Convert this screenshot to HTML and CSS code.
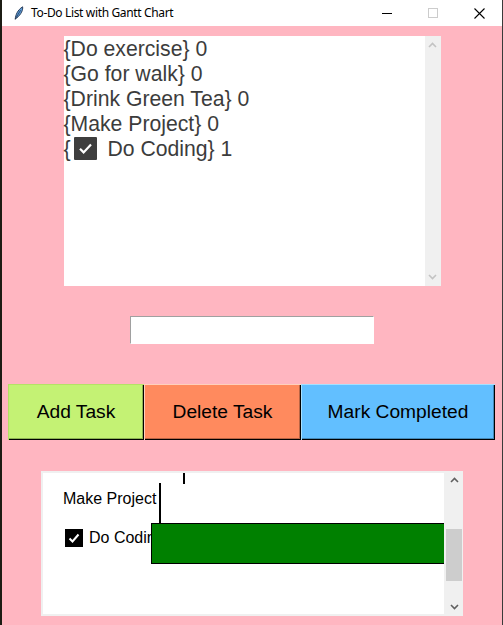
FILE: index.html
```html
<!DOCTYPE html>
<html>
<head>
<meta charset="utf-8">
<title>To-Do List with Gantt Chart</title>
<link rel="stylesheet" href="styles.css">
</head>
<body>
<div class="screen">
  <div class="desk-edge"></div>
  <div class="window">
    <div class="titlebar">
      <svg class="app-icon" width="10" height="14" viewBox="0 0 10 14">
        <path d="M1.2 13.2 C1.6 9 3.5 4 8.6 0.8 C9.2 3.6 7.4 8.4 2.4 12.2 Z" fill="#5b9bd8" stroke="#1d2f4a" stroke-width="0.9"/>
        <path d="M1.2 13.2 L6.6 4.2" stroke="#1d2f4a" stroke-width="0.7"/>
      </svg>
      <span class="title">To-Do List with Gantt Chart</span>
      <div class="controls">
        <div class="ctl"><svg width="10" height="10" viewBox="0 0 10 10"><path d="M0 5.5 H10" stroke="#000" stroke-width="1"/></svg></div>
        <div class="ctl"><svg width="10" height="10" viewBox="0 0 10 10"><rect x="0.5" y="0.5" width="9" height="9" fill="none" stroke="#cccccc" stroke-width="1"/></svg></div>
        <div class="ctl"><svg width="11" height="11" viewBox="0 0 11 11"><path d="M0.5 0.5 L10.5 10.5 M10.5 0.5 L0.5 10.5" stroke="#000" stroke-width="1.1"/></svg></div>
      </div>
    </div>
    <div class="content">
      <div class="listbox">
        <ul class="items">
          <li>{Do exercise} 0</li>
          <li>{Go for walk} 0</li>
          <li>{Drink Green Tea} 0</li>
          <li>{Make Project} 0</li>
          <li>{<span class="emoji-check"><svg width="23" height="23" viewBox="0 0 23 23"><rect width="23" height="23" rx="1" fill="#3e3e3e"/><path d="M6 11.8 L9.6 15.4 L17 7.6" fill="none" stroke="#fff" stroke-width="2.2"/></svg></span> Do Coding} 1</li>
        </ul>
        <div class="vscroll faint">
          <svg class="arrow" width="9" height="6" viewBox="0 0 9 6"><path d="M1 5 L4.5 1.5 L8 5" fill="none" stroke="#c3c3c3" stroke-width="1.6"/></svg>
          <div class="track"></div>
          <svg class="arrow" width="9" height="6" viewBox="0 0 9 6"><path d="M1 1 L4.5 4.5 L8 1" fill="none" stroke="#c3c3c3" stroke-width="1.6"/></svg>
        </div>
      </div>

      <input class="entry" type="text">

      <div class="buttons">
        <button class="btn btn-add">Add Task</button>
        <button class="btn btn-delete">Delete Task</button>
        <button class="btn btn-mark">Mark Completed</button>
      </div>

      <div class="gantt">
        <div class="canvas">
          <div class="tick"></div>
          <div class="vline"></div>
          <div class="label label-make">Make Project</div>
          <div class="label label-code"><span class="cbox"><svg width="18" height="18" viewBox="0 0 18 18"><rect width="18" height="18" fill="#000"/><path d="M4.5 9.5 L7.5 12.5 L13.5 5.5" fill="none" stroke="#fff" stroke-width="2"/></svg></span>Do Coding</div>
          <div class="bar"></div>
        </div>
        <div class="vscroll">
          <svg class="arrow" width="9" height="6" viewBox="0 0 9 6"><path d="M1 5 L4.5 1.5 L8 5" fill="none" stroke="#606060" stroke-width="1.6"/></svg>
          <div class="track"><div class="thumb"></div></div>
          <svg class="arrow" width="9" height="6" viewBox="0 0 9 6"><path d="M1 1 L4.5 4.5 L8 1" fill="none" stroke="#606060" stroke-width="1.6"/></svg>
        </div>
      </div>
    </div>
  </div>
</div>
</body>
</html>
```

FILE: styles.css
```css
html, body {
  margin: 0;
  padding: 0;
}
body {
  width: 503px;
  height: 625px;
  overflow: hidden;
  background: #ffb6c1;
}
.screen {
  display: flex;
  width: 503px;
  height: 625px;
}
.desk-edge {
  width: 2px;
  background: #1c1c14;
  flex: none;
}
.window {
  flex: none;
  width: 500px;
  border-right: 1px solid #3a3a3a;
  display: flex;
  flex-direction: column;
  background: #ffb6c1;
}
.titlebar {
  height: 26px;
  background: #ffffff;
  display: flex;
  align-items: center;
  flex: none;
}
.app-icon {
  margin-left: 12px;
  margin-top: -1px;
}
.title {
  margin-left: 7px;
  font-family: "Noto Sans", "Open Sans", sans-serif;
  font-size: 12px;
  color: #000;
  letter-spacing: -0.35px;
  margin-top: -2px;
}
.controls {
  margin-left: auto;
  display: flex;
  height: 26px;
}
.ctl {
  width: 46px;
  height: 26px;
  display: flex;
  align-items: center;
  justify-content: center;
}
.content {
  flex: 1;
  display: flex;
  flex-direction: column;
  align-items: center;
}

/* listbox */
.listbox {
  margin-top: 10px;
  width: 377px;
  height: 250px;
  background: #ffffff;
  display: flex;
  flex: none;
}
.items {
  list-style: none;
  margin: 0;
  padding: 0;
  flex: 1;
  font-family: "Liberation Sans", Arial, sans-serif;
  font-size: 21.2px;
  line-height: 25px;
  color: #3c3c3c;
  white-space: nowrap;
}
.emoji-check {
  display: inline-block;
  width: 23px;
  height: 23px;
  margin-left: 3px;
  margin-right: 5px;
  vertical-align: -4px;
}
.emoji-check svg {
  display: block;
}
.vscroll {
  width: 16px;
  background: #f0f0f0;
  display: flex;
  flex-direction: column;
  align-items: center;
  flex: none;
}
.vscroll .arrow {
  flex: none;
  margin: 6px 0;
}
.vscroll .track {
  flex: 1;
  width: 100%;
  position: relative;
}

/* entry */
.entry {
  margin-top: 30px;
  width: 244px;
  height: 28px;
  box-sizing: border-box;
  border: 1px solid #ffffff;
  border-top-color: #a0a0a0;
  border-left-color: #a0a0a0;
  background: #ffffff;
  padding: 0;
  outline: none;
  flex: none;
}

/* buttons */
.buttons {
  margin-top: 40px;
  align-self: flex-start;
  margin-left: 6px;
  display: flex;
  height: 56px;
  flex: none;
}
.btn {
  height: 56px;
  border: none;
  padding: 0;
  margin: 0;
  font-family: "Liberation Sans", Arial, sans-serif;
  font-size: 19.2px;
  color: #000;
}
.btn-add {
  width: 136px;
  background: #c4f274;
  box-shadow: inset 1px 1px 0 #b5e266, inset -1px -1px 0 #000, inset -2px -2px 0 #8cb252;
}
.btn-delete {
  width: 157px;
  background: #ff8a5e;
  box-shadow: inset 1px 1px 0 #ffd0bc, inset -1px -1px 0 #000, inset -2px -2px 0 #b86444;
}
.btn-mark {
  width: 194px;
  background: #62bfff;
  box-shadow: inset 1px 1px 0 #a6e0ff, inset -1px -1px 0 #000, inset -2px -2px 0 #4489b8;
}

/* gantt */
.gantt {
  margin-top: 31px;
  width: 422px;
  height: 145px;
  box-sizing: border-box;
  background: #f0f0f0;
  padding: 2px 1px 2px 2px;
  display: flex;
  flex: none;
}
.canvas {
  width: 401px;
  height: 141px;
  background: #ffffff;
  position: relative;
  overflow: hidden;
  flex: none;
  margin-right: 2px;
}
.gantt .vscroll {
  width: 16px;
  margin-top: -2px;
  margin-bottom: -2px;
}
.thumb {
  position: absolute;
  left: 0;
  right: 0;
  top: 40px;
  height: 52px;
  background: #cdcdcd;
}
.tick {
  position: absolute;
  left: 140px;
  top: 0;
  width: 2px;
  height: 11px;
  background: #000;
}
.vline {
  position: absolute;
  left: 116px;
  top: 10px;
  width: 2px;
  height: 41px;
  background: #000;
}
.label {
  position: absolute;
  font-family: "Liberation Sans", Arial, sans-serif;
  font-size: 16px;
  color: #000;
  white-space: nowrap;
  line-height: 18px;
}
.label-make {
  left: 20px;
  top: 17px;
}
.label-code {
  left: 22px;
  top: 56px;
  display: flex;
  align-items: center;
}
.cbox {
  width: 18px;
  height: 18px;
  margin-right: 6px;
}
.cbox svg {
  display: block;
}
.bar {
  position: absolute;
  left: 108px;
  top: 50px;
  width: 320px;
  height: 41px;
  box-sizing: border-box;
  background: #008000;
  border: 1px solid #000;
}
```
